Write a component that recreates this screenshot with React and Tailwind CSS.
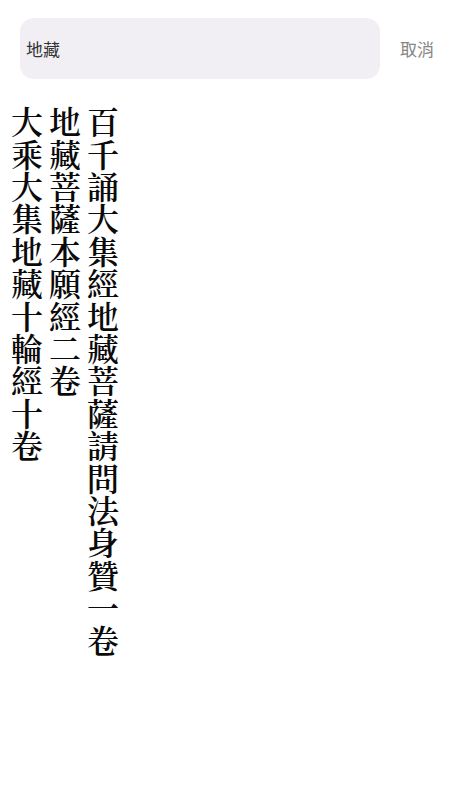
import { useState } from "react";

const results = [
  "百千誦大集經地藏菩薩請問法身贊一卷",
  "地藏菩薩本願經二卷",
  "大乘大集地藏十輪經十卷",
];

export default function App() {
  const [query, setQuery] = useState("地藏");

  return (
    <div
      className="min-h-[800px] w-[450px] bg-white"
      style={{ fontFamily: '"Noto Sans CJK TC", "Noto Sans CJK SC", sans-serif' }}
    >
      {/* search bar */}
      <div className="flex items-center pl-5 pr-4 pt-[18px]">
        <div className="flex h-[61px] flex-1 items-center rounded-[14px] bg-[#f1eff4] px-[6px]">
          <input
            value={query}
            onChange={(e) => setQuery(e.target.value)}
            className="w-full bg-transparent text-[17px] text-[#333] outline-none"
          />
        </div>
        <button className="ml-5 text-[17px] text-[#858585]">取消</button>
      </div>

      {/* results, vertical */}
      <div className="px-2 pt-[27px]">
        <div
          className="w-fit text-[32px] leading-[38px] font-semibold tracking-[0.4px] text-[#0a0a0a]"
          style={{
            writingMode: "vertical-rl",
            fontFamily: '"Noto Serif CJK TC", "Noto Serif CJK SC", "Noto Sans CJK TC", serif',
          }}
        >
          {results.map((r) => (
            <div key={r}>{r}</div>
          ))}
        </div>
      </div>
    </div>
  );
}
